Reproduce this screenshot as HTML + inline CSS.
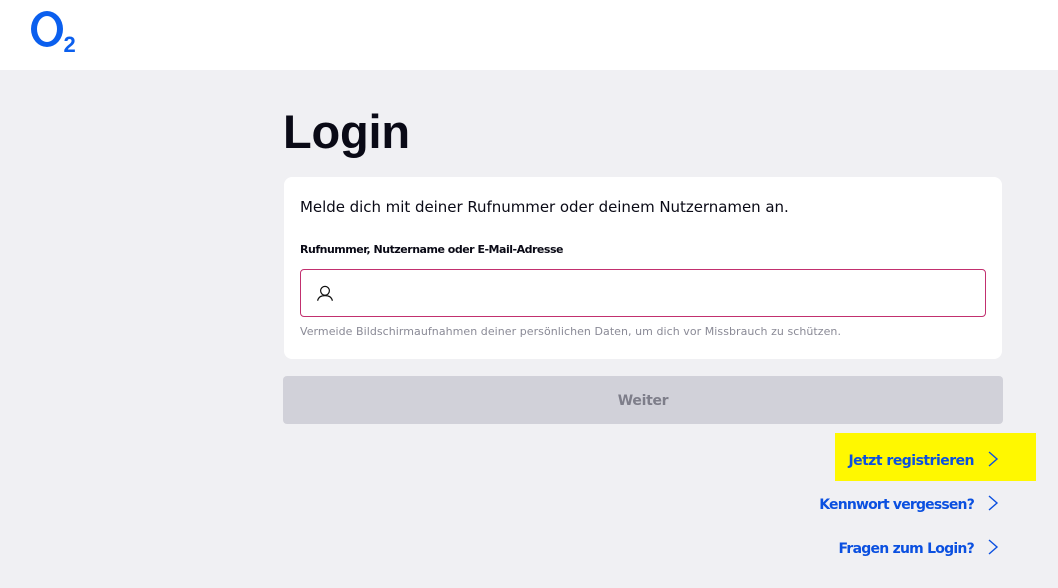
<!DOCTYPE html>
<html lang="de"><head><meta charset="utf-8"><title>Login</title>
<style>
html,body{margin:0;padding:0;width:1058px;height:588px;overflow:hidden;background:#f0f0f3;font-family:"DejaVu Sans","Liberation Sans",sans-serif}
.a{position:absolute;white-space:nowrap}
#hdr{left:0;top:0;width:1058px;height:70px;background:#fff}
#card{left:284px;top:177px;width:718px;height:182px;background:#fff;border-radius:8px}
#input{left:300px;top:269px;width:684px;height:46px;border:1px solid #c2306f;border-radius:4px;background:#fff}
#btn{left:283px;top:376px;width:720px;height:48px;background:#d1d1d9;border-radius:4px;color:#7e7e8a;font-weight:700;font-size:14px;letter-spacing:-.3px;line-height:50px;text-align:center}
#yl{left:835px;top:433px;width:201px;height:48px;background:#fff800}
.l{color:#0b50e0;font-weight:700;font-size:14px;line-height:20px;right:84px}
svg{position:absolute;overflow:visible}
</style></head><body>
<div class="a" id="hdr"></div>
<svg style="left:0;top:0" width="100" height="70"><path fill-rule="evenodd" fill="#0b5fee" d="M31 29a16 18 0 1 0 32 0a16 18 0 1 0-32 0zM37 29a10 13 0 1 1 20 0a10 13 0 1 1-20 0z"/><text x="63.500" y="52" font-family="Liberation Sans" font-weight="700" font-size="22" fill="#0b5fee">2</text></svg>
<div class="a" style="left:283px;top:102px;font-family:'Liberation Sans',sans-serif;font-size:47px;line-height:60px;font-weight:700;color:#0a0a16;letter-spacing:-.2px">Login</div>
<div class="a" id="card"></div>
<div class="a" style="left:300px;top:197px;font-size:15px;line-height:20px;color:#0a0a16;letter-spacing:-.035px">Melde dich mit deiner Rufnummer oder deinem Nutzernamen an.</div>
<div class="a" style="left:300px;top:241px;font-size:11px;line-height:18px;font-weight:700;color:#0a0a16;letter-spacing:-.49px">Rufnummer, Nutzername oder E-Mail-Adresse</div>
<div class="a" id="input"></div>
<svg style="left:316px;top:284px" width="18" height="18" fill="none" stroke="#111" stroke-width="1.2"><circle cx="9" cy="6.800" r="4.400"/><path d="M1.600 16.800c.7-3.600 3.400-5.200 7.400-5.200s6.700 1.600 7.400 5.200"/></svg>
<div class="a" style="left:300px;top:323px;font-size:11px;line-height:18px;color:#8a8a96;letter-spacing:.053px">Vermeide Bildschirmaufnahmen deiner persönlichen Daten, um dich vor Missbrauch zu schützen.</div>
<div class="a" id="btn">Weiter</div>
<div class="a" id="yl"></div>
<div class="a l" style="top:451px;letter-spacing:-.52px">Jetzt registrieren</div>
<div class="a l" style="top:495px;letter-spacing:-.82px">Kennwort vergessen?</div>
<div class="a l" style="top:539px;letter-spacing:-.76px">Fragen zum Login?</div>
<svg style="left:988px;top:451px" width="10" height="16" fill="none" stroke="#0b50e0" stroke-width="1.4"><path d="M1 1l8 7-8 7"/></svg>
<svg style="left:988px;top:495px" width="10" height="16" fill="none" stroke="#0b50e0" stroke-width="1.4"><path d="M1 1l8 7-8 7"/></svg>
<svg style="left:988px;top:539px" width="10" height="16" fill="none" stroke="#0b50e0" stroke-width="1.4"><path d="M1 1l8 7-8 7"/></svg>
</body></html>
